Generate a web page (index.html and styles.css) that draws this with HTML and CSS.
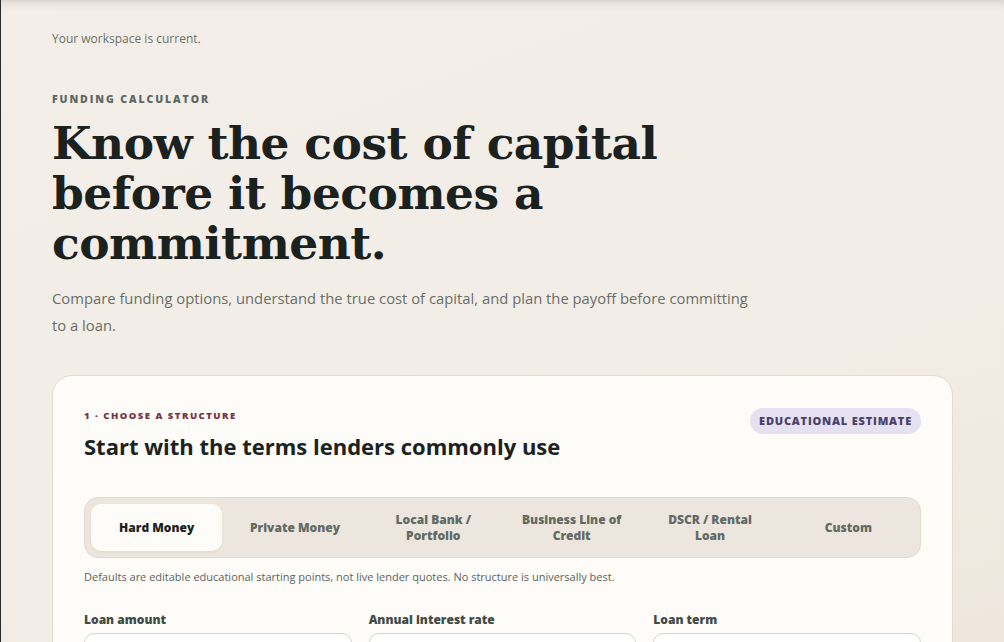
FILE: index.html
```html
<!DOCTYPE html>
<html lang="en">
<head>
<meta charset="utf-8">
<title>Funding Calculator</title>
<link rel="stylesheet" href="styles.css">
</head>
<body>
<div class="page">
  <p class="status">Your workspace is current.</p>
  <header class="hero">
    <p class="eyebrow">Funding calculator</p>
    <h1 class="title">Know the cost of capital before it becomes a commitment.</h1>
    <p class="lede">Compare funding options, understand the true cost of capital, and plan the payoff before committing to a loan.</p>
  </header>
  <section class="card">
    <div class="card-head">
      <div>
        <p class="step">1 · Choose a structure</p>
        <h2 class="card-title">Start with the terms lenders commonly use</h2>
      </div>
      <span class="badge">Educational estimate</span>
    </div>
    <div class="tabs">
      <button class="tab active">Hard Money</button>
      <button class="tab">Private Money</button>
      <button class="tab">Local Bank / Portfolio</button>
      <button class="tab">Business Line of Credit</button>
      <button class="tab">DSCR / Rental Loan</button>
      <button class="tab">Custom</button>
    </div>
    <p class="note">Defaults are editable educational starting points, not live lender quotes. No structure is universally best.</p>
    <div class="fields">
      <label class="field"><span class="label">Loan amount</span><span class="input"></span></label>
      <label class="field"><span class="label">Annual interest rate</span><span class="input"></span></label>
      <label class="field"><span class="label">Loan term</span><span class="input"></span></label>
    </div>
  </section>
</div>
</body>
</html>
```
FILE: styles.css
```css
html, body {
  margin: 0;
  padding: 0;
  height: 100%;
  overflow: hidden;
}
body {
  background: linear-gradient(160deg, #f3efe8 0%, #f2eee7 55%, #efe7de 100%);
  font-family: "Open Sans", "Noto Sans", sans-serif;
  color: #1f2522;
}
.page {
  box-sizing: border-box;
  height: 642px;
  overflow: hidden;
  border-left: 1px solid #2b2b2b;
  padding: 31px 51px 0 51px;
  box-shadow: inset 0 9px 9px -7px rgba(60, 50, 40, 0.18);
}
.status {
  margin: 0;
  font-size: 12px;
  line-height: 16px;
  color: #6c706b;
}
.hero { margin-top: 45px; }
.eyebrow {
  margin: 0;
  font-size: 10.5px;
  line-height: 14px;
  font-weight: 800;
  letter-spacing: 1.9px;
  text-transform: uppercase;
  color: #5d6864;
}
.title {
  margin: 12px 0 0;
  max-width: 640px;
  font-family: "DejaVu Serif", "Liberation Serif", serif;
  font-weight: 700;
  font-size: 45.5px;
  line-height: 50px;
  letter-spacing: -0.5px;
  color: #1b211e;
}
.lede {
  margin: 17px 0 0;
  max-width: 712px;
  font-size: 14.8px;
  line-height: 27px;
  color: #6a6e69;
}
.card {
  margin-top: 36px;
  width: 901px;
  box-sizing: border-box;
  background: #fdfcf8;
  border: 1px solid #e3dcd2;
  border-radius: 20px;
  padding: 33px 31px 24px;
}
.card-head {
  display: flex;
  justify-content: space-between;
  align-items: flex-start;
}
.step {
  margin: 0;
  font-size: 9.5px;
  line-height: 14px;
  font-weight: 800;
  letter-spacing: 1.5px;
  text-transform: uppercase;
  color: #7a3140;
}
.card-title {
  margin: 8px 0 0;
  font-size: 22px;
  line-height: 30px;
  font-weight: 700;
  color: #1c2220;
}
.badge {
  display: inline-block;
  margin-top: -1px;
  padding: 6px 9px;
  border-radius: 14px;
  background: #e6e1f0;
  color: #4b3f6b;
  font-size: 11px;
  line-height: 14px;
  font-weight: 800;
  letter-spacing: 0.8px;
  text-transform: uppercase;
}
.tabs {
  margin-top: 36px;
  display: grid;
  grid-template-columns: repeat(6, 1fr);
  gap: 7px;
  padding: 6px;
  background: #ece6de;
  border: 1px solid #e1dad0;
  border-radius: 14px;
}
.tab {
  height: 47px;
  border: 0;
  border-radius: 10px;
  background: transparent;
  font-family: inherit;
  font-size: 12px;
  line-height: 16px;
  font-weight: 800;
  color: #616a64;
  padding: 0 14px;
}
.tab.active {
  background: #fdfcf8;
  color: #1c2220;
  box-shadow: 0 1px 3px rgba(60, 50, 40, 0.08);
}
.note {
  margin: 11px 0 0;
  font-size: 11px;
  line-height: 16px;
  color: #5e635e;
}
.fields {
  margin-top: 27px;
  display: grid;
  grid-template-columns: repeat(3, 1fr);
  gap: 17px;
}
.field { display: flex; flex-direction: column; }
.label {
  font-size: 12px;
  line-height: 16px;
  font-weight: 800;
  color: #414a45;
}
.input {
  margin-top: 5px;
  height: 40px;
  border: 1px solid #d8d2c8;
  border-radius: 10px;
  background: #fff;
}
```
